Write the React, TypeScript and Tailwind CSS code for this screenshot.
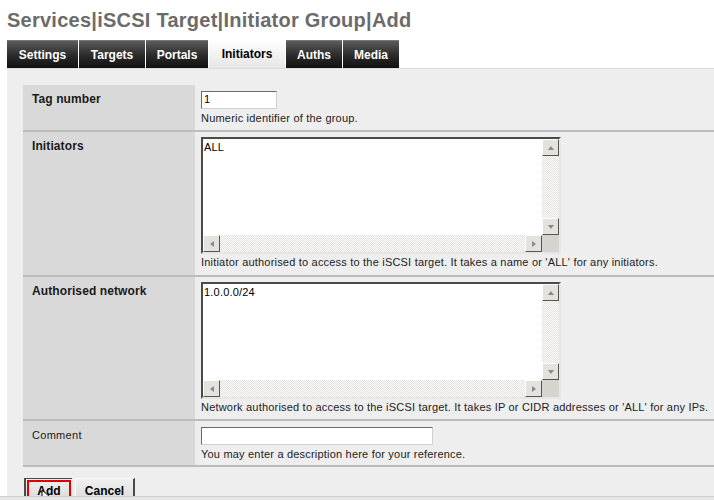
import React from 'react';

const font = "font-['Liberation_Sans',Arial,sans-serif]";

const tabs = [
  { name: 'Settings', w: 'w-[71px]' },
  { name: 'Targets', w: 'w-[66px]' },
  { name: 'Portals', w: 'w-[62px]' },
  { name: 'Initiators', w: 'w-[76px]', active: true },
  { name: 'Auths', w: 'w-[56px]' },
  { name: 'Media', w: 'w-[56px]' },
];

const Arrow = ({ dir }: { dir: 'up' | 'down' | 'left' | 'right' }) => {
  const pts = {
    up: '4,1 7,5 1,5',
    down: '1,1 7,1 4,5',
    left: '5,1 5,7 1,4',
    right: '1,1 1,7 5,4',
  }[dir];
  const box = dir === 'up' || dir === 'down' ? '0 0 8 6' : '0 0 6 8';
  const size = dir === 'up' || dir === 'down' ? { w: 8, h: 6 } : { w: 6, h: 8 };
  return (
    <svg width={size.w} height={size.h} viewBox={box}>
      <polygon points={pts} fill="#8a8a8a" />
    </svg>
  );
};

const ScrollBtn = ({ dir }: { dir: 'up' | 'down' | 'left' | 'right' }) => (
  <div className="w-[17px] h-[17px] shrink-0 flex items-center justify-center bg-[#e4e2dc] border border-t-white border-l-white border-r-[#555] border-b-[#555]">
    <Arrow dir={dir} />
  </div>
);

const track = 'bg-[#f2f1ee] bg-[repeating-conic-gradient(#ffffff_0_25%,#e2dfd8_0_50%)] bg-[length:2px_2px]';

const FakeTextarea = ({ value }: { value: string }) => (
  <div className="w-[360px] h-[117px] flex flex-col bg-white border-2 border-t-[#4a4a4a] border-l-[#4a4a4a] border-r-[#e6e6e6] border-b-[#e6e6e6]">
    <div className="flex flex-1 min-h-0">
      <div className="flex-1 pl-[1px] pt-[1px] text-[11px] leading-[14px] tracking-[0.2px] text-black">{value}</div>
      <div className="flex flex-col w-[17px]">
        <ScrollBtn dir="up" />
        <div className={`flex-1 ${track}`} />
        <ScrollBtn dir="down" />
      </div>
    </div>
    <div className="flex h-[17px]">
      <ScrollBtn dir="left" />
      <div className={`flex-1 ${track}`} />
      <ScrollBtn dir="right" />
      <div className="w-[17px] bg-[#d6d4ce]" />
    </div>
  </div>
);

const TextInput = ({ value, w }: { value: string; w: string }) => (
  <div className={`${w} h-[18px] bg-white border border-t-[#6a6a6a] border-l-[#6a6a6a] border-r-[#d0d0d0] border-b-[#d0d0d0] pl-[2px] text-[11px] leading-[15px] text-black`}>
    {value}
  </div>
);

const Row = ({ label, bold = true, children }: { label: string; bold?: boolean; children: React.ReactNode }) => (
  <div className="flex border-b-2 border-[#bcbcbc]">
    <div
      className={`w-[172px] shrink-0 bg-[#d9d9d9] pl-[9px] pt-[7px] leading-[14px] text-[#1a1a1a] ${
        bold ? 'font-bold text-[12px] tracking-[0.1px]' : 'text-[11px] tracking-[0.3px]'
      }`}
    >
      {label}
    </div>
    <div className="flex-1 bg-[#eeeeee] pl-[6px]">{children}</div>
  </div>
);

const Help = ({ children }: { children: React.ReactNode }) => (
  <div className="text-[11px] leading-[14px] tracking-[0.2px] text-[#222] whitespace-nowrap">{children}</div>
);

export default function App() {
  return (
    <div className={`relative w-[714px] h-[500px] overflow-hidden bg-white ${font}`}>
      <h1 className="pl-[7px] pt-[8px] text-[20px] leading-[24px] font-bold tracking-[0.25px] text-[#6b6b6b] whitespace-nowrap">
        Services|iSCSI Target|Initiator Group|Add
      </h1>

      <div className="flex ml-[7px] mt-[8px] h-[28px] gap-[1px]">
        {tabs.map((t) => (
          <div
            key={t.name}
            className={`${t.w} h-full flex items-center justify-center text-[12px] font-bold ${
              t.active
                ? 'bg-gradient-to-b from-white to-[#e6e6e6] text-black'
                : 'bg-gradient-to-b from-[#5c5c5c] via-[#2e2e2e] to-[#111] text-white border-t border-[#777]'
            }`}
          >
            {t.name}
          </div>
        ))}
      </div>

      <div className="ml-[7px] h-[432px] bg-[#eeeeee] border-t border-[#dcdcdc] pt-[16px] pl-[16px]">
        <div className="flex flex-col">
          <Row label="Tag number">
            <div className="pt-[6px] pb-[5px]">
              <TextInput value="1" w="w-[76px]" />
              <div className="mt-[2px]">
                <Help>Numeric identifier of the group.</Help>
              </div>
            </div>
          </Row>
          <Row label="Initiators">
            <div className="pt-[5px] pb-[6px]">
              <FakeTextarea value="ALL" />
              <div className="mt-[1px]">
                <Help>Initiator authorised to access to the iSCSI target. It takes a name or 'ALL' for any initiators.</Help>
              </div>
            </div>
          </Row>
          <Row label="Authorised network">
            <div className="pt-[5px] pb-[5px]">
              <FakeTextarea value="1.0.0.0/24" />
              <div className="mt-[1px]">
                <Help>Network authorised to access to the iSCSI target. It takes IP or CIDR addresses or 'ALL' for any IPs.</Help>
              </div>
            </div>
          </Row>
          <Row label="Comment" bold={false}>
            <div className="pt-[6px] pb-[4px]">
              <TextInput value="" w="w-[232px]" />
              <div className="mt-[2px]">
                <Help>You may enter a description here for your reference.</Help>
              </div>
            </div>
          </Row>
        </div>

        <div className="flex gap-[3px] mt-[11px] ml-[1px]">
          <div className="w-[48px] h-[24px] bg-gradient-to-b from-[#f0f0f0] to-[#d8d8d8] border-l-2 border-t border-[#4a4a4a] p-[1px]">
            <div className="h-full border-2 border-[#e00000] flex items-center justify-center text-[12px] font-bold text-black">
              Add
            </div>
          </div>
          <div className="w-[60px] h-[24px] bg-gradient-to-b from-[#f0f0f0] to-[#dcdcdc] border-t border-l border-[#f8f8f8] border-r-2 border-r-[#4a4a4a] flex items-center justify-center text-[12px] font-bold text-black">
            Cancel
          </div>
        </div>
      </div>

      <svg className="absolute left-[41px] top-[489px]" width="10" height="14" viewBox="0 0 10 14">
        <polygon points="1,1 1,12 4,9 6,13 8,12 6,8 9,8" fill="white" stroke="black" strokeWidth="1" />
      </svg>
      <div className="absolute left-0 right-0 bottom-0 h-[4px] bg-[#e6e6e6] border-t border-[#cfcfcf]" />
    </div>
  );
}
